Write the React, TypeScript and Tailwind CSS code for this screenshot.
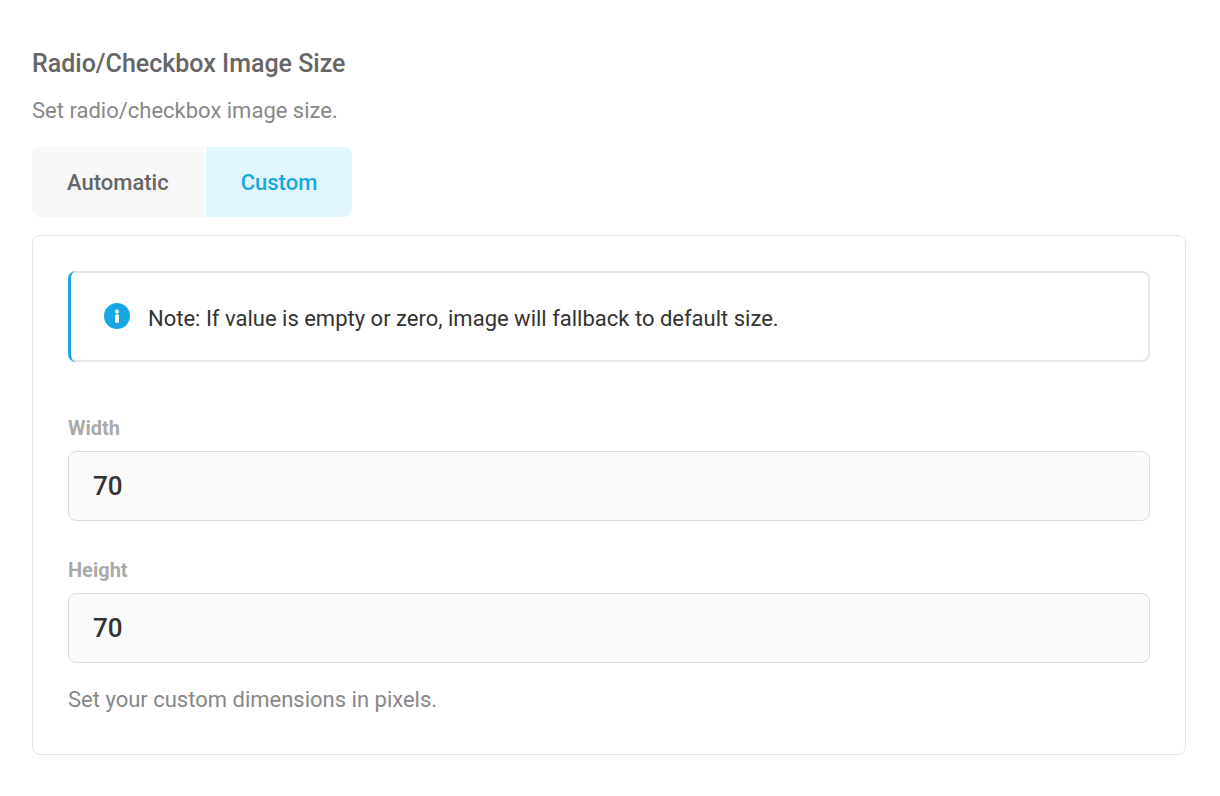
import { useState } from 'react';
import clsx from 'clsx';

type SizeMode = 'automatic' | 'custom';

const MODES: { id: SizeMode; label: string }[] = [
  { id: 'automatic', label: 'Automatic' },
  { id: 'custom', label: 'Custom' },
];

export default function App() {
  const [mode, setMode] = useState<SizeMode>('custom');
  const [width, setWidth] = useState('70');
  const [height, setHeight] = useState('70');

  return (
    <main className="bg-white pt-12 pr-[34px] pb-10 pl-8 font-['Roboto',sans-serif] text-[22px] text-[#888888]">
      <h2 className="text-[25px] leading-8 font-medium text-[#666666]">Radio/Checkbox Image Size</h2>
      <p className="mt-[15px] leading-8">Set radio/checkbox image size.</p>

      <div className="mt-5 flex gap-0.5" role="tablist">
        {MODES.map((m) => (
          <ModeTab key={m.id} label={m.label} active={mode === m.id} onClick={() => setMode(m.id)} />
        ))}
      </div>

      {mode === 'custom' && (
        <section className="mt-[18px] rounded-lg border border-[#e6e6e6] px-[35px] pt-[35px] pb-[38px]">
          <Notice>Note: If value is empty or zero, image will fallback to default size.</Notice>
          <div className="mt-[54px] flex flex-col gap-[37px]">
            <SizeField id="image-width" label="Width" value={width} onChange={setWidth} />
            <SizeField id="image-height" label="Height" value={height} onChange={setHeight} />
          </div>
          <p className="mt-[21px] leading-8">Set your custom dimensions in pixels.</p>
        </section>
      )}
    </main>
  );
}

function ModeTab({ label, active, onClick }: { label: string; active: boolean; onClick: () => void }) {
  return (
    <button
      type="button"
      role="tab"
      aria-selected={active}
      onClick={onClick}
      className={clsx(
        'h-[70px] cursor-pointer px-[35px] font-medium first:rounded-l-lg last:rounded-r-lg',
        active ? 'bg-[#e1f6ff] text-[#17a8e3]' : 'bg-[#f8f8f8] text-[#666666]'
      )}
    >
      {label}
    </button>
  );
}

function Notice({ children }: { children: string }) {
  return (
    <div className="relative flex items-start gap-[18px] rounded-lg border-2 border-[#e6e6e6] px-[34px] pt-[30px] pb-[25px] text-[#333333]">
      {/* accent edge, drawn over the grey border */}
      <span className="absolute -inset-y-0.5 -left-0.5 w-2.5 rounded-l-lg border-l-3 border-[#17a8e3]" />
      <svg viewBox="0 0 26 26" className="size-[26px] shrink-0" aria-hidden="true">
        <circle cx="13" cy="13" r="13" fill="#17a8e3" />
        <circle cx="13" cy="8.6" r="2" fill="white" />
        <rect x="11" y="11.3" width="4" height="8.7" rx="1.8" fill="white" />
      </svg>
      <p className="leading-8">{children}</p>
    </div>
  );
}

function SizeField({ id, label, value, onChange }: { id: string; label: string; value: string; onChange: (v: string) => void }) {
  return (
    <div className="flex flex-col gap-[11px]">
      <label htmlFor={id} className="text-[20px] leading-6 font-bold text-[#aaaaaa]">{label}</label>
      <input
        id={id}
        type="text"
        inputMode="numeric"
        value={value}
        onChange={(e) => onChange(e.target.value)}
        className="h-[70px] w-full rounded-lg border border-[#dddddd] bg-[#fafafa] px-6 text-[26px] font-medium text-[#333333] outline-none focus:border-[#17a8e3]"
      />
    </div>
  );
}
